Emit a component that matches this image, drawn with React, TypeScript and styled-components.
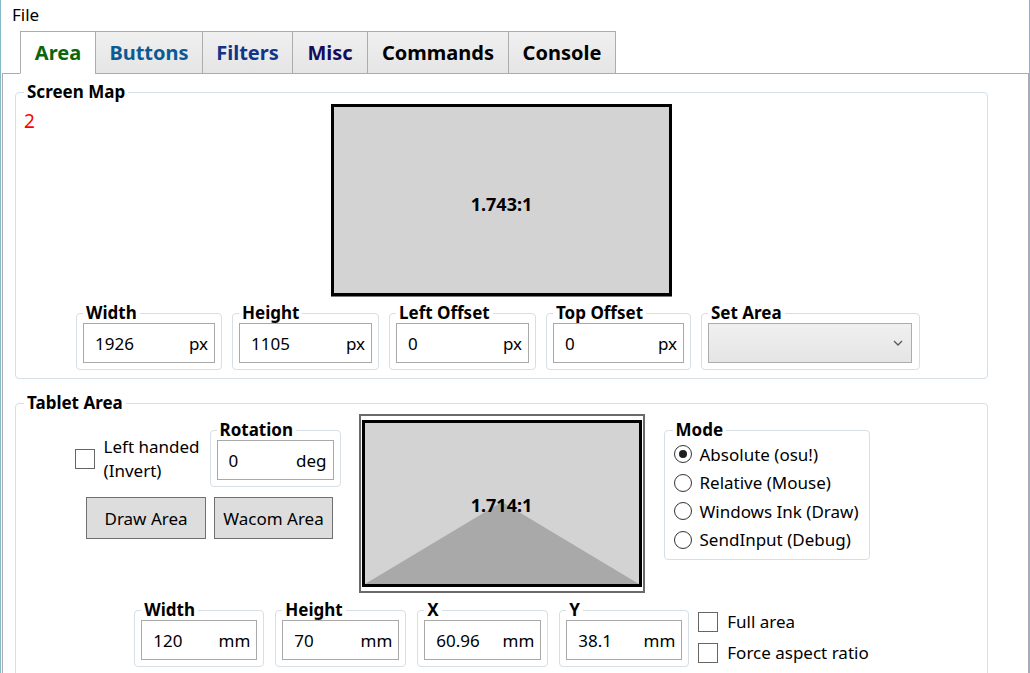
import React from 'react';
import styled, { createGlobalStyle } from 'styled-components';

const GlobalStyle = createGlobalStyle`
  html, body { margin: 0; padding: 0; background: #ffffff; }
  body { font-family: "Noto Sans", "Open Sans", sans-serif; color: #000; }
  #root { width: 1030px; height: 673px; overflow: hidden; }
  * { box-sizing: border-box; }
`;

const Window = styled.div`
  width: 1030px;
  height: 673px;
  border-left: 1px solid #86b9c8;
  border-right: 1px solid #86b9c8;
  display: flex;
  flex-direction: column;
  overflow: hidden;
  background: #fff;
  font-family: "Noto Sans", "Open Sans", sans-serif;
  font-size: 17px;
`;

const MenuBar = styled.div`
  flex: none;
  height: 31px;
  display: flex;
  align-items: center;
  padding: 0 0 2px 11px;
  font-size: 17px;
`;

const TabStrip = styled.div`
  flex: none;
  height: 43px;
  margin-bottom: -1px;
  padding-left: 19px;
  display: flex;
  position: relative;
  z-index: 1;
`;

const Tab = styled.div<{ $w: number; $color: string; $selected?: boolean }>`
  width: ${(p) => p.$w}px;
  height: 43px;
  margin-left: -1px;
  &:first-child { margin-left: 0; }
  border: 1px solid #acacac;
  border-bottom-color: ${(p) => (p.$selected ? '#ffffff' : '#acacac')};
  background: ${(p) => (p.$selected ? '#ffffff' : 'linear-gradient(#f0f0f0, #e5e5e5)')};
  color: ${(p) => p.$color};
  font-weight: 700;
  font-size: 20px;
  display: flex;
  align-items: center;
  justify-content: center;
  padding-bottom: 1px;
`;

const Panel = styled.div`
  flex: none;
  margin-left: 1px;
  border: 1px solid #acacac;
  background: #fff;
  padding: 9px 40px 0 12px;
  display: flex;
  flex-direction: column;
`;

const GroupBox = styled.fieldset<{ $pad: string; $w?: number; $mt?: number }>`
  margin: ${(p) => p.$mt ?? 0}px 0 0 0;
  min-width: 0;
  ${(p) => (p.$w ? `width: ${p.$w}px; flex: none;` : '')}
  border: 1px solid #d5dfe5;
  border-radius: 4px;
  padding: ${(p) => p.$pad};
`;

const Legend = styled.legend`
  font-weight: 700;
  font-size: 17px;
  line-height: 18px;
  padding: 0 3px;
  margin-left: 0;
`;

const ScreenGrid = styled.div`
  display: grid;
  grid-template-columns: 1fr auto 1fr;
  align-items: start;
`;

const RedNote = styled.div`
  color: #ff0000;
  font-size: 19px;
  line-height: 23px;
  margin-top: 6px;
  justify-self: start;
`;

const ScreenCanvas = styled.div`
  width: 341px;
  height: 192px;
  border: 3px solid #000;
  background: #d3d3d3;
  box-shadow: 0 1px 0 #7a7a7a;
  display: flex;
  align-items: center;
  justify-content: center;
  padding-top: 7px;
  font-weight: 700;
  font-size: 18px;
`;

const FieldsRow = styled.div<{ $gap: number; $mt: number; $indent?: number }>`
  grid-column: 1 / -1;
  display: flex;
  justify-content: ${(p) => (p.$indent ? 'flex-start' : 'center')};
  padding-left: ${(p) => p.$indent ?? 0}px;
  align-items: flex-start;
  gap: ${(p) => p.$gap}px;
  margin-top: ${(p) => p.$mt}px;
`;

const TextBox = styled.div`
  height: 40px;
  border: 1px solid #a9a9a9;
  background: #fff;
  display: flex;
  align-items: center;
  justify-content: space-between;
  padding: 0 6px 0 11px;
  font-size: 17px;
`;

const ComboBox = styled.div`
  height: 40px;
  border: 1px solid #acacac;
  background: linear-gradient(#f0f0f0, #e5e5e5);
  display: flex;
  align-items: center;
  justify-content: flex-end;
  padding-right: 8px;
`;

const TopSection = styled.div`
  display: grid;
  grid-template-columns: 1fr auto 1fr;
  align-items: start;
`;

const LeftBlock = styled.div`
  justify-self: end;
  margin: 7px 18px 0 0;
  display: flex;
  flex-direction: column;
  align-items: center;
  gap: 10px;
`;

const OptionRow = styled.div`
  display: flex;
  align-items: flex-start;
  gap: 10px;
`;

const CheckOption = styled.label<{ $mt?: number; $lh: number }>`
  display: flex;
  align-items: center;
  gap: 9px;
  margin-top: ${(p) => p.$mt ?? 0}px;
  font-size: 17px;
  line-height: ${(p) => p.$lh}px;
`;

const CheckBox = styled.span`
  width: 20px;
  height: 20px;
  border: 1px solid #666666;
  background: #fff;
  flex: none;
`;

const ButtonRow = styled.div`
  display: flex;
  gap: 8px;
  padding-left: 4px;
`;

const Button = styled.button<{ $w: number }>`
  width: ${(p) => p.$w}px;
  height: 42px;
  background: #dddddd;
  border: 1px solid #707070;
  font-family: "Noto Sans", "Open Sans", sans-serif;
  font-size: 17px;
  color: #000;
  padding: 0;
`;

const TabletFrame = styled.div`
  width: 286px;
  height: 179px;
  border: 2px solid #6a6a6a;
  background: #fff;
  padding: 4px 1px;
  display: flex;
`;

const TabletArea = styled.div`
  flex: 1;
  border: 3px solid #000;
  background: #d3d3d3;
  position: relative;
  display: flex;
  align-items: center;
  justify-content: center;
  padding-top: 3px;
  font-weight: 700;
  font-size: 18px;
`;

const AreaShape = styled.svg`
  position: absolute;
  inset: 0;
  width: 100%;
  height: 100%;
`;

const AreaLabel = styled.span`
  position: relative;
`;

const ModeBox = styled(GroupBox)`
  justify-self: start;
  margin: 7px 0 0 19px;
`;

const RadioList = styled.div`
  display: flex;
  flex-direction: column;
  margin-left: 1px;
`;

const RadioRow = styled.label`
  height: 28.5px;
  display: flex;
  align-items: center;
  gap: 8px;
  font-size: 17px;
  white-space: nowrap;
`;

const RadioCircle = styled.span<{ $checked?: boolean }>`
  width: 18px;
  height: 18px;
  border: 1px solid #333;
  border-radius: 50%;
  background: #fff;
  display: inline-flex;
  align-items: center;
  justify-content: center;
  flex: none;
  &::after {
    content: '';
    width: 8px;
    height: 8px;
    border-radius: 50%;
    background: #1f1f1f;
    display: ${(p) => (p.$checked ? 'block' : 'none')};
  }
`;

const CheckColumn = styled.div`
  display: flex;
  flex-direction: column;
  gap: 11px;
  margin: 11px 0 0 -2px;
`;

type Field = { label: string; value: string; unit: string; w: number };

const screenFields: Field[] = [
  { label: 'Width', value: '1926', unit: 'px', w: 146 },
  { label: 'Height', value: '1105', unit: 'px', w: 147 },
  { label: 'Left Offset', value: '0', unit: 'px', w: 147 },
  { label: 'Top Offset', value: '0', unit: 'px', w: 145 },
];

const tabletFields: Field[] = [
  { label: 'Width', value: '120', unit: 'mm', w: 130 },
  { label: 'Height', value: '70', unit: 'mm', w: 131 },
  { label: 'X', value: '60.96', unit: 'mm', w: 131 },
  { label: 'Y', value: '38.1', unit: 'mm', w: 130 },
];

const tabs = [
  { name: 'Area', w: 76, color: '#0b650b', selected: true },
  { name: 'Buttons', w: 108, color: '#0c5a94' },
  { name: 'Filters', w: 91, color: '#12358a' },
  { name: 'Misc', w: 76, color: '#140c5c' },
  { name: 'Commands', w: 142, color: '#000000' },
  { name: 'Console', w: 108, color: '#000000' },
];

const modes = ['Absolute (osu!)', 'Relative (Mouse)', 'Windows Ink (Draw)', 'SendInput (Debug)'];

const FieldGroup: React.FC<{ f: Field }> = ({ f }) => (
  <GroupBox $pad="1px 6px 6px 6px" $w={f.w}>
    <Legend>{f.label}</Legend>
    <TextBox>
      <span>{f.value}</span>
      <span>{f.unit}</span>
    </TextBox>
  </GroupBox>
);

export default function App() {
  return (
    <>
      <GlobalStyle />
      <Window>
        <MenuBar>File</MenuBar>
        <TabStrip>
          {tabs.map((t) => (
            <Tab key={t.name} $w={t.w} $color={t.color} $selected={t.selected}>
              {t.name}
            </Tab>
          ))}
        </TabStrip>
        <Panel>
          <GroupBox $pad="3px 8px 8px 8px">
            <Legend>Screen Map</Legend>
            <ScreenGrid>
              <RedNote>2</RedNote>
              <ScreenCanvas>1.743:1</ScreenCanvas>
              <div />
              <FieldsRow $gap={10} $mt={8} $indent={52}>
                {screenFields.map((f) => (
                  <FieldGroup key={f.label} f={f} />
                ))}
                <GroupBox $pad="1px 7px 6px 6px" $w={219}>
                  <Legend>Set Area</Legend>
                  <ComboBox>
                    <svg width="10" height="6" viewBox="0 0 10 6">
                      <polyline points="1,1 5,5 9,1" fill="none" stroke="#5a5a5a" strokeWidth="1.3" />
                    </svg>
                  </ComboBox>
                </GroupBox>
              </FieldsRow>
            </ScreenGrid>
          </GroupBox>

          <GroupBox $pad="2px 8px 20px 8px" $mt={15}>
            <Legend>Tablet Area</Legend>
            <TopSection>
              <LeftBlock>
                <OptionRow>
                  <CheckOption $mt={14} $lh={24}>
                    <CheckBox />
                    <span>
                      Left handed
                      <br />
                      (Invert)
                    </span>
                  </CheckOption>
                  <GroupBox $pad="1px 6px 6px 6px" $w={131}>
                    <Legend>Rotation</Legend>
                    <TextBox>
                      <span>0</span>
                      <span>deg</span>
                    </TextBox>
                  </GroupBox>
                </OptionRow>
                <ButtonRow>
                  <Button $w={120}>Draw Area</Button>
                  <Button $w={119}>Wacom Area</Button>
                </ButtonRow>
              </LeftBlock>
              <TabletFrame>
                <TabletArea>
                  <AreaShape viewBox="0 0 100 100" preserveAspectRatio="none">
                    <polygon points="0,100 50,49 100,100" fill="#a9a9a9" />
                  </AreaShape>
                  <AreaLabel>1.714:1</AreaLabel>
                </TabletArea>
              </TabletFrame>
              <ModeBox $pad="1px 8px 5px 8px" $w={206}>
                <Legend>Mode</Legend>
                <RadioList>
                  {modes.map((m, i) => (
                    <RadioRow key={m}>
                      <RadioCircle $checked={i === 0} />
                      {m}
                    </RadioRow>
                  ))}
                </RadioList>
              </ModeBox>
            </TopSection>
            <FieldsRow $gap={11} $mt={8}>
              {tabletFields.map((f) => (
                <FieldGroup key={f.label} f={f} />
              ))}
              <CheckColumn>
                <CheckOption $lh={20}>
                  <CheckBox />
                  <span>Full area</span>
                </CheckOption>
                <CheckOption $lh={20}>
                  <CheckBox />
                  <span>Force aspect ratio</span>
                </CheckOption>
              </CheckColumn>
            </FieldsRow>
          </GroupBox>
        </Panel>
      </Window>
    </>
  );
}
